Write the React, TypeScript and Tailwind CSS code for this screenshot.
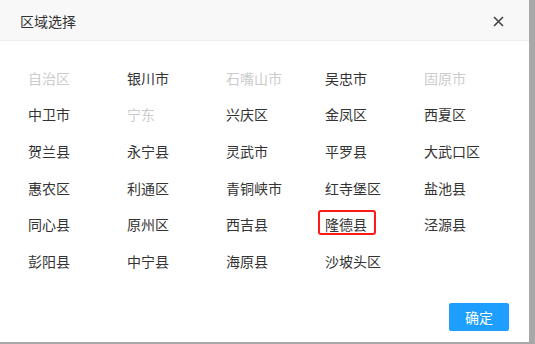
import { useState } from 'react';

interface Area {
    name: string;
    disabled?: boolean;
}

const areas: Area[] = [
    { name: '自治区', disabled: true },
    { name: '银川市' },
    { name: '石嘴山市', disabled: true },
    { name: '吴忠市' },
    { name: '固原市', disabled: true },
    { name: '中卫市' },
    { name: '宁东', disabled: true },
    { name: '兴庆区' },
    { name: '金凤区' },
    { name: '西夏区' },
    { name: '贺兰县' },
    { name: '永宁县' },
    { name: '灵武市' },
    { name: '平罗县' },
    { name: '大武口区' },
    { name: '惠农区' },
    { name: '利通区' },
    { name: '青铜峡市' },
    { name: '红寺堡区' },
    { name: '盐池县' },
    { name: '同心县' },
    { name: '原州区' },
    { name: '西吉县' },
    { name: '隆德县' },
    { name: '泾源县' },
    { name: '彭阳县' },
    { name: '中宁县' },
    { name: '海原县' },
    { name: '沙坡头区' },
];

const AreaDialog = () => {
    const [selected, setSelected] = useState('隆德县');

    return (
        <div className='w-[535px] h-[344px] bg-[#a8a8a8] font-["Noto_Sans_CJK_SC","Noto_Sans",sans-serif]'>
            <div className='w-[529px] h-[342px] bg-white flex flex-col'>
                <div className='h-[41px] shrink-0 bg-[#f8f8f8] border-b border-[#eeeeee] flex items-center justify-between pl-5 pr-[25px] pt-[2px]'>
                    <span className='text-[14px] text-[#333333]'>区域选择</span>
                    <svg width='11' height='11' viewBox='0 0 11 11' className='text-[#444444]'>
                        <path d='M1 1 L10 10 M10 1 L1 10' stroke='currentColor' strokeWidth='1.6' />
                    </svg>
                </div>
                <div className='flex-1 pl-[21px] pt-[17px]'>
                    <div className='grid grid-cols-[repeat(5,99px)] auto-rows-[36.6px]'>
                        {areas.map((area) => (
                            <div key={area.name} className='flex items-center'>
                                <button
                                    type='button'
                                    disabled={area.disabled}
                                    onClick={() => setSelected(area.name)}
                                    className={
                                        area.name === selected
                                            ? 'h-[25px] pl-[5px] pr-[7px] pt-[3px] border-2 border-[#ff1a1a] rounded-[3px] text-[14px] leading-[18px] text-[#333333]'
                                            : area.disabled
                                            ? 'h-[25px] pl-[5px] pr-[7px] pt-[3px] border-2 border-transparent text-[14px] leading-[18px] text-[#cccccc]'
                                            : 'h-[25px] pl-[5px] pr-[7px] pt-[3px] border-2 border-transparent text-[14px] leading-[18px] text-[#333333]'
                                    }
                                >
                                    {area.name}
                                </button>
                            </div>
                        ))}
                    </div>
                </div>
                <div className='flex justify-end pr-5 pb-[11px]'>
                    <button
                        type='button'
                        className='h-[28px] px-[15px] bg-[#1e9fff] border border-[#1e9fff] rounded-[2px] text-white text-[14px] leading-[26px]'
                    >
                        确定
                    </button>
                </div>
            </div>
        </div>
    );
};

export default function App() {
    return <AreaDialog />;
}
